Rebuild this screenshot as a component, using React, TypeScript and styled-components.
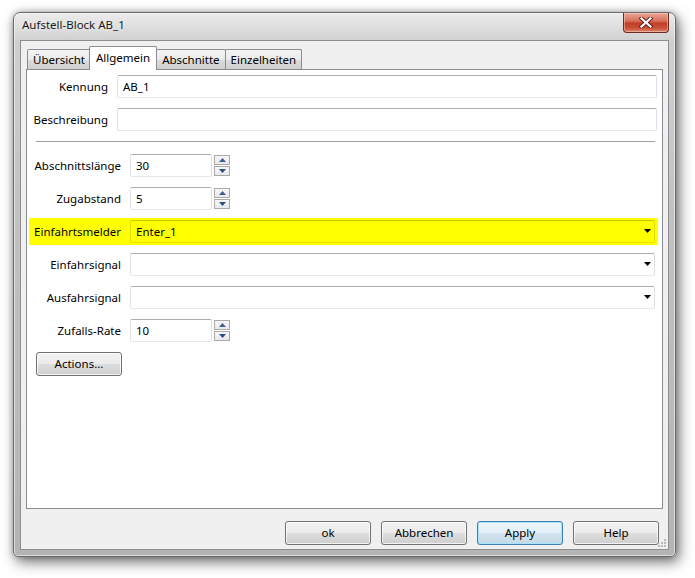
import React from "react";
import styled, { createGlobalStyle, css } from "styled-components";

const GlobalStyle = createGlobalStyle`
  html, body { margin: 0; padding: 0; background: #ffffff; }
  body {
    font-family: "Noto Sans", "Open Sans", "DejaVu Sans", sans-serif;
    font-size: 11.5px;
    color: #000;
  }
  * { box-sizing: border-box; }
`;

const Page = styled.div`
  padding: 12px 0 0 13px;
  width: 695px;
  height: 578px;
  overflow: hidden;
`;

const Window = styled.div`
  width: 663px;
  height: 545px;
  display: flex;
  flex-direction: column;
  padding: 0 6px 6px 6px;
  border: 1px solid #6a6a6a;
  border-radius: 7px 7px 5px 5px;
  background: linear-gradient(to bottom, #ececec 0px, #dedede 14px, #d0d0d0 28px, #c2c2c2 200px, #b4b4b4 100%);
  box-shadow: inset 0 0 0 1px rgba(255, 255, 255, 0.55), 3px 5px 14px rgba(0, 0, 0, 0.55), 0 0 6px rgba(0, 0, 0, 0.25);
`;

const TitleBar = styled.div`
  height: 27px;
  display: flex;
  align-items: flex-start;
  justify-content: space-between;
`;

const TitleText = styled.span`
  padding: 4px 0 0 2px;
  font-size: 11.5px;
  color: #1a1a1a;
  text-shadow: 0 0 6px rgba(255, 255, 255, 0.9);
`;

const CloseButton = styled.div`
  width: 46px;
  height: 20px;
  border: 1px solid #6d2a20;
  border-top: none;
  border-radius: 0 0 4px 4px;
  background: linear-gradient(to bottom, #e9a797 0%, #d9735f 40%, #c23f26 55%, #c9523a 80%, #e08a6e 100%);
  box-shadow: inset 0 0 0 1px rgba(255, 220, 210, 0.45);
  display: flex;
  align-items: center;
  justify-content: center;
`;

const Client = styled.div`
  position: relative;
  flex: 1;
  display: flex;
  flex-direction: column;
  background: #f0f0f0;
  border: 1px solid #8d8d8d;
  padding: 6px 5px 4px 5px;
`;

const TabStrip = styled.div`
  display: flex;
  align-items: flex-end;
  height: 22px;
  padding-left: 1px;
  position: relative;
  z-index: 2;
`;

const Tab = styled.div<{ $active?: boolean }>`
  height: 20px;
  padding: 0 5px 1px 5px;
  margin-right: -1px;
  display: flex;
  align-items: center;
  border: 1px solid #898c95;
  border-bottom: none;
  border-radius: 2px 2px 0 0;
  background: linear-gradient(to bottom, #f3f3f3 0%, #ebebeb 50%, #dddddd 51%, #cfcfcf 100%);
  white-space: nowrap;
  ${(p) =>
    p.$active &&
    css`
      height: 24px;
      margin-bottom: -1px;
      padding: 0 6px 3px 6px;
      margin-left: -1px;
      margin-right: -1px;
      background: #ffffff;
      position: relative;
      z-index: 3;
    `}
`;

const TabPanel = styled.div`
  height: 440px;
  background: #ffffff;
  border: 1px solid #898c95;
  display: flex;
  flex-direction: column;
  position: relative;
  z-index: 1;
`;

const UpperSection = styled.div`
  display: flex;
  flex-direction: column;
  gap: 10px;
  padding: 5px 5px 0 0;
`;

const UpperRow = styled.div`
  display: grid;
  grid-template-columns: 81px 1fr;
  column-gap: 9px;
  align-items: center;
`;

const Label = styled.span`
  text-align: right;
  white-space: nowrap;
  padding-bottom: 1px;
`;

const TextBox = styled.div<{ $width?: number }>`
  height: 23px;
  display: flex;
  align-items: center;
  padding: 0 5px 1px 5px;
  background: #ffffff;
  border: 1px solid;
  border-color: #abadb3 #dbdfe6 #e3e9ef #e2e3ea;
  border-radius: 2px;
  ${(p) => p.$width !== undefined && css`width: ${p.$width}px;`}
`;

const Separator = styled.div`
  height: 2px;
  margin: 10px 7px 0 9px;
  border-top: 1px solid #a0a0a0;
  border-bottom: 1px solid #ffffff;
`;

const LowerSection = styled.div`
  display: flex;
  flex-direction: column;
  gap: 6px;
  margin: 9px 4px 0 2px;
`;

const LowerRow = styled.div<{ $highlight?: boolean }>`
  display: grid;
  grid-template-columns: 92px 1fr;
  column-gap: 9px;
  align-items: center;
  height: 27px;
  padding: 2px 3px 2px 0;
  background: ${(p) => (p.$highlight ? "#ffff00" : "transparent")};
`;

const SpinField = styled.div`
  display: flex;
  align-items: center;
  gap: 2px;
`;

const SpinButtons = styled.div`
  display: flex;
  flex-direction: column;
  gap: 1px;
  height: 23px;
  padding-top: 1px;
`;

const SpinButton = styled.div`
  width: 16px;
  height: 10px;
  border: 1px solid #a9a9a9;
  background: linear-gradient(to bottom, #f7f7f7 0%, #e9e9e9 100%);
  display: flex;
  align-items: center;
  justify-content: center;
`;

const ComboBox = styled.div<{ $highlight?: boolean }>`
  height: 23px;
  display: flex;
  align-items: center;
  justify-content: space-between;
  padding: 0 3px 1px 5px;
  border: 1px solid;
  border-radius: 2px;
  ${(p) =>
    p.$highlight
      ? css`
          background: #ffff00;
          border-color: #c9c900 #dede00 #e4e400 #dede00;
        `
      : css`
          background: #ffffff;
          border-color: #abadb3 #dbdfe6 #e3e9ef #e2e3ea;
        `}
`;

const PushButton = styled.div<{ $default?: boolean }>`
  width: 86px;
  height: 24px;
  display: flex;
  align-items: center;
  justify-content: center;
  padding-bottom: 2px;
  border: 1px solid #707070;
  border-radius: 3px;
  background: linear-gradient(to bottom, #f2f2f2 0%, #ebebeb 50%, #dddddd 51%, #cfcfcf 100%);
  box-shadow: inset 0 0 0 1px rgba(255, 255, 255, 0.75);
  white-space: nowrap;
  ${(p) =>
    p.$default &&
    css`
      border-color: #3c7fb1;
      box-shadow: inset 0 0 0 1px #a8e2fb;
      background: linear-gradient(to bottom, #eaf6fd 0%, #e3eef6 50%, #d2e4ef 51%, #c4d9e7 100%);
    `}
`;

const ActionsButton = styled(PushButton)`
  margin: 8px 0 0 9px;
`;

const ButtonBar = styled.div`
  display: flex;
  justify-content: flex-end;
  gap: 10px;
  margin-top: 12px;
  padding-right: 4px;
`;

const Grip = styled.svg`
  position: absolute;
  right: 1px;
  bottom: 1px;
`;

const UpArrow = () => (
  <svg width="7" height="4" viewBox="0 0 7 4">
    <polygon points="0,4 7,4 3.5,0" fill="#3f5f8f" />
  </svg>
);

const DownArrow = () => (
  <svg width="7" height="4" viewBox="0 0 7 4">
    <polygon points="0,0 7,0 3.5,4" fill="#2d4d80" />
  </svg>
);

const ComboArrow = () => (
  <svg width="7" height="4" viewBox="0 0 7 4">
    <polygon points="0,0 7,0 3.5,4" fill="#000" />
  </svg>
);

const Spinner = ({ value }: { value: string }) => (
  <SpinField>
    <TextBox $width={82}>{value}</TextBox>
    <SpinButtons>
      <SpinButton>
        <UpArrow />
      </SpinButton>
      <SpinButton>
        <DownArrow />
      </SpinButton>
    </SpinButtons>
  </SpinField>
);

export default function App() {
  return (
    <>
      <GlobalStyle />
      <Page>
        <Window>
          <TitleBar>
            <TitleText>Aufstell-Block AB_1</TitleText>
            <CloseButton>
              <svg width="14" height="11" viewBox="0 0 14 11">
                <path d="M2.5 1.5 L11.5 9.5 M11.5 1.5 L2.5 9.5" stroke="#5a2018" strokeWidth="4" strokeLinecap="square" />
                <path d="M2.5 1.5 L11.5 9.5 M11.5 1.5 L2.5 9.5" stroke="#ffffff" strokeWidth="2.2" strokeLinecap="square" />
              </svg>
            </CloseButton>
          </TitleBar>
          <Client>
            <TabStrip>
              <Tab>Übersicht</Tab>
              <Tab $active>Allgemein</Tab>
              <Tab>Abschnitte</Tab>
              <Tab>Einzelheiten</Tab>
            </TabStrip>
            <TabPanel>
              <UpperSection>
                <UpperRow>
                  <Label>Kennung</Label>
                  <TextBox>AB_1</TextBox>
                </UpperRow>
                <UpperRow>
                  <Label>Beschreibung</Label>
                  <TextBox />
                </UpperRow>
              </UpperSection>
              <Separator />
              <LowerSection>
                <LowerRow>
                  <Label>Abschnittslänge</Label>
                  <Spinner value="30" />
                </LowerRow>
                <LowerRow>
                  <Label>Zugabstand</Label>
                  <Spinner value="5" />
                </LowerRow>
                <LowerRow $highlight>
                  <Label>Einfahrtsmelder</Label>
                  <ComboBox $highlight>
                    <span>Enter_1</span>
                    <ComboArrow />
                  </ComboBox>
                </LowerRow>
                <LowerRow>
                  <Label>Einfahrsignal</Label>
                  <ComboBox>
                    <span />
                    <ComboArrow />
                  </ComboBox>
                </LowerRow>
                <LowerRow>
                  <Label>Ausfahrsignal</Label>
                  <ComboBox>
                    <span />
                    <ComboArrow />
                  </ComboBox>
                </LowerRow>
                <LowerRow>
                  <Label>Zufalls-Rate</Label>
                  <Spinner value="10" />
                </LowerRow>
              </LowerSection>
              <ActionsButton>Actions...</ActionsButton>
            </TabPanel>
            <ButtonBar>
              <PushButton>ok</PushButton>
              <PushButton>Abbrechen</PushButton>
              <PushButton $default>Apply</PushButton>
              <PushButton>Help</PushButton>
            </ButtonBar>
            <Grip width="9" height="9" viewBox="0 0 9 9">
              <rect x="6" y="0" width="2" height="2" fill="#b8b8b8" />
              <rect x="3" y="3" width="2" height="2" fill="#b8b8b8" />
              <rect x="6" y="3" width="2" height="2" fill="#b8b8b8" />
              <rect x="0" y="6" width="2" height="2" fill="#b8b8b8" />
              <rect x="3" y="6" width="2" height="2" fill="#b8b8b8" />
              <rect x="6" y="6" width="2" height="2" fill="#b8b8b8" />
            </Grip>
          </Client>
        </Window>
      </Page>
    </>
  );
}
